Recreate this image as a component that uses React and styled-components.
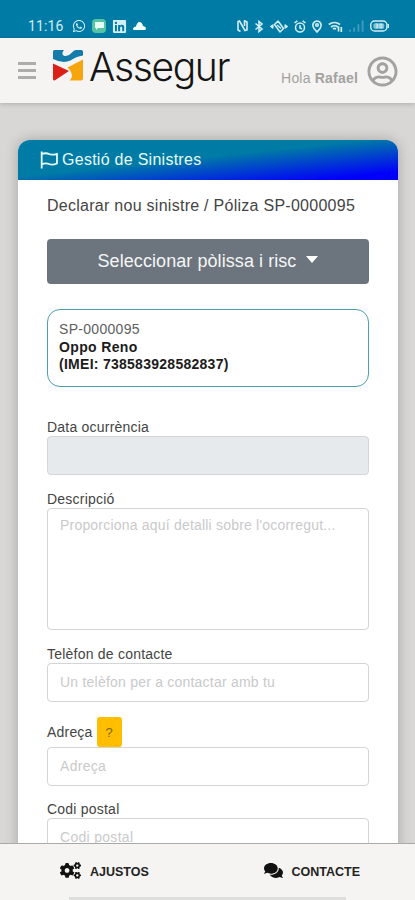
import React from 'react';
import styled, { createGlobalStyle, css } from 'styled-components';
import { FaWhatsapp, FaLinkedin, FaRegUserCircle, FaCogs, FaComments } from 'react-icons/fa';

const GlobalStyle = createGlobalStyle`
  * { box-sizing: border-box; }
  body { margin: 0; font-family: "Liberation Sans", Arial, sans-serif; color: #333; background: #d8d7d5; }
`;

const Screen = styled.div`
  display: flex;
  flex-direction: column;
  width: 415px;
  height: 900px;
  overflow: hidden;
  background: #d8d7d5;
`;

const StatusBar = styled.div`
  flex: none;
  height: 38px;
  padding: 14px 26px 0 28px;
  display: flex;
  justify-content: space-between;
  background: #007ba6;
  color: #d3eef4;
`;

const StatusGroup = styled.div`
  display: flex;
  align-items: center;
  height: 24px;
  gap: 6px;
  svg { display: block; flex: none; }
`;

const Clock = styled.span`
  width: 38px;
  font: 14px/24px Roboto, sans-serif;
  letter-spacing: 0.1px;
  white-space: nowrap;
`;

const ChatBadge = styled.span`
  display: flex;
  align-items: center;
  justify-content: center;
  width: 14px;
  height: 14px;
  border-radius: 4px;
  background: #55c4a4;
`;

const Header = styled.header`
  flex: none;
  position: relative;
  z-index: 1;
  display: flex;
  height: 65px;
  padding: 0 17px 0 18px;
  background: #f5f4f2;
  box-shadow: 0 1px 5px rgba(0, 0, 0, 0.2);
`;

const MenuButton = styled.button`
  width: 18px;
  height: 17px;
  margin-top: 24px;
  padding: 0;
  border: 0;
  background: none;
  display: flex;
  flex-direction: column;
  justify-content: space-between;
`;

const MenuLine = styled.span`
  height: 3px;
  background: #adacab;
`;

const Brand = styled.div`
  display: flex;
  margin-left: 17px;
  svg { margin-top: 12px; flex: none; }
`;

const BrandName = styled.span`
  margin: 4px 0 0 6px;
  font: 300 39px/50px Inter, sans-serif;
  letter-spacing: -1.35px;
  color: #151515;
`;

const Account = styled.div`
  display: flex;
  margin-left: auto;
  color: #a3a2a1;
  svg { margin-top: 18px; }
`;

const Greeting = styled.span`
  margin: 31px 9px 0 0;
  font-size: 14px;
  line-height: 18px;
  letter-spacing: 0.2px;
  white-space: nowrap;
`;

const Main = styled.main`
  flex: 1;
  min-height: 0;
  overflow: hidden;
  padding: 37px 17px 0 18px;
`;

const Card = styled.section`
  height: 900px;
  border-radius: 12px 12px 0 0;
  background: #fff;
  box-shadow: 0 0 13px rgba(0, 0, 0, 0.24);
`;

const CardHeader = styled.div`
  display: flex;
  align-items: center;
  height: 40px;
  padding-left: 22px;
  border-radius: 12px 12px 0 0;
  background: linear-gradient(to bottom right, #007ba5 0%, #007ba5 46%, #0000fa 90%);
  color: #e8fafa;
  font-size: 16px;
  svg { margin-right: 4px; }
`;

const CardBody = styled.div`
  padding: 0 29px;
  display: flex;
  flex-direction: column;
`;

const Text = styled.span`
  letter-spacing: ${(p) => p.$track || 0}px;
  white-space: nowrap;
`;

const Title = styled.h1`
  margin: 15px 0 0;
  height: 22px;
  font-size: 16px;
  font-weight: 400;
  line-height: 22px;
  color: #444;
`;

const SelectButton = styled.button`
  display: flex;
  align-items: center;
  justify-content: center;
  height: 45px;
  margin-top: 22px;
  padding: 0 0 1px;
  border: 0;
  border-radius: 4px;
  background: #6c757d;
  color: #f5f6f7;
  font: 18px "Liberation Sans", Arial, sans-serif;
`;

const Caret = styled.span`
  margin: -4px 0 0 10px;
  border: 6px solid transparent;
  border-top: 7px solid #fff;
  border-bottom: 0;
`;

const PolicyBox = styled.div`
  height: 78px;
  margin-top: 25px;
  padding: 11px 11px 0;
  border: 1px solid #4b9fb0;
  border-radius: 13px;
  font-size: 14px;
  line-height: 17.5px;
  color: #222;
`;

const PolicyLine = styled.div`
  font-weight: ${(p) => (p.$bold ? 700 : 400)};
  color: ${(p) => (p.$bold ? '#1c1c1c' : '#606060')};
`;

const Field = styled.div`
  display: flex;
  flex-direction: column;
  margin-top: ${(p) => p.$top}px;
`;

const Label = styled.label`
  display: flex;
  align-items: center;
  height: ${(p) => p.$height || 18}px;
  font-size: 14px;
  color: #444;
`;

const controlStyle = css`
  width: 100%;
  border: 1px solid #d4d5d6;
  border-radius: 4px;
  padding: 0 12px 2px;
  background: #fff;
  font: 14px "Liberation Sans", Arial, sans-serif;
  letter-spacing: ${(p) => p.$track || 0}px;
  &::placeholder { color: #c9cacb; opacity: 1; }
`;

const Input = styled.input`
  ${controlStyle}
  height: 39px;
  &:disabled { background: #e7eaed; }
`;

const TextArea = styled.textarea`
  ${controlStyle}
  display: block;
  height: 122px;
  padding-top: 8px;
  resize: none;
`;

const HelpButton = styled.button`
  width: 25px;
  height: 30px;
  margin-left: 4px;
  padding: 0;
  border: 0;
  border-radius: 3px;
  background: #ffbf00;
  color: #7d640e;
  font: 13px "Liberation Sans", Arial, sans-serif;
`;

const BottomBar = styled.nav`
  flex: none;
  position: relative;
  height: 57px;
  display: grid;
  grid-template-columns: 1fr 1fr;
  border-top: 1px solid #a9a9a8;
  background: #f5f4f2;
`;

const NavItem = styled.a`
  display: flex;
  align-items: center;
  height: 56px;
  padding-left: ${(p) => p.$left}px;
  color: #222;
  font-size: 12.5px;
  font-weight: 700;
  svg { margin: -3px 9px 0 0; color: #111; }
`;

const HomeHandle = styled.div`
  position: absolute;
  left: 69px;
  bottom: 0;
  width: 277px;
  height: 3px;
  background: #dededd;
`;

const LogoMark = () => (
  <svg width="30" height="31" viewBox="0 0 30 31">
    <path d="M0 1.500Q0 0 1.500 0H11Q8 3.500 10.500 5.500Q14.500 7.500 19 2.500Q20.500 0 23 0H28.500Q30 0 30 1.500V5.500Q23 6.500 17.500 10.500Q10 14 0 9Z" fill="#147caa" />
    <path d="M0 13.500L16 21L2 30.300Q0 31 0 29Z" fill="#dc2019" />
    <path d="M30 9.500V28.500Q30 30.500 28 30.500H16.500Q20 28 18.500 23Q17.500 20 14.500 17.500Z" fill="#f6a50c" />
  </svg>
);

const FlagIcon = () => (
  <svg width="18" height="18" viewBox="0 0 18 18" fill="none" stroke="currentColor" strokeWidth="1.8" strokeLinejoin="round">
    <path d="M1.700 0.500V17.500M1.700 3Q6 1.500 9 3T17 2.800V12.500Q12.500 14.500 9 13T1.700 13.500" />
  </svg>
);

const NfcIcon = () => (
  <svg width="11" height="12" viewBox="0 0 11 12" fill="none" stroke="currentColor" strokeWidth="1.6">
    <path d="M3.500 11.500L1 10V1.500L2.500 1L8 10.500L10 10V2L7.500 0.700V6" />
  </svg>
);

const BluetoothIcon = () => (
  <svg width="10" height="13" viewBox="0 0 10 13" fill="none" stroke="currentColor" strokeWidth="1.6">
    <path d="M1.500 3.500L8 9L5 11.500V1.500L8 4L1.500 9.500" />
  </svg>
);

const VibrateIcon = () => (
  <svg width="18" height="13" viewBox="0 0 18 13" fill="none" stroke="currentColor" strokeWidth="1.5" strokeLinejoin="round">
    <path d="M4.500 4.500L8 1L13.500 8.500L10 12Z" />
    <path d="M7 5L11 8.500M0.800 6.500L2.800 5V8ZM17.200 6.500L15.200 5V8Z" />
  </svg>
);

const AlarmIcon = () => (
  <svg width="12" height="13" viewBox="0 0 12 13" fill="none" stroke="currentColor" strokeWidth="1.5">
    <circle cx="6" cy="7.500" r="4.500" />
    <path d="M0.500 3L3.300 0.800M11.500 3L8.700 0.800M6 5V8L8 9" />
  </svg>
);

const PinIcon = () => (
  <svg width="10" height="13" viewBox="0 0 10 13" fill="none" stroke="currentColor" strokeWidth="1.600">
    <path d="M5 12L2 8.500Q-0.500 4.500 2.500 1.800Q5 0.200 7.500 1.800Q10.500 4.500 8 8.500Z" />
    <circle cx="5" cy="5" r="1.300" />
  </svg>
);

const WifiIcon = () => (
  <svg width="15" height="13" viewBox="0 0 15 13" fill="none" stroke="currentColor" strokeWidth="1.7">
    <path d="M0.800 4.500Q6.500 0.500 12 4.500M3 7Q6.500 4.500 10 7M5 9Q6.500 7.800 8 9M10.500 6.500V11.500M13.300 7V12" />
  </svg>
);

const SignalIcon = () => (
  <svg width="15" height="12" viewBox="0 0 16 12" fill="#3f9bbd">
    <path d="M0 10h2v2H0zM4.500 7.500h2V12h-2zM9 4h2v8H9zM13.500 0h2v12h-2z" />
  </svg>
);

const BatteryIcon = () => (
  <svg width="19" height="12" viewBox="0 0 20 12" fill="none" stroke="currentColor" strokeWidth="1.5">
    <rect x="0.800" y="0.800" width="17" height="10.400" rx="4" />
    <path d="M19.200 4V8" />
    <rect x="3.500" y="3" width="11.500" height="6" rx="2" fill="#7fc2d4" stroke="none" />
    <path d="M6 4h2v4H6M8 6H6.500M10.500 4h2v4h-2z" strokeWidth="1" />
  </svg>
);

export default function App() {
  return (
    <Screen>
      <GlobalStyle />
      <StatusBar>
        <StatusGroup>
          <Clock>11:16</Clock>
          <FaWhatsapp size={14} />
          <ChatBadge>
            <svg width="9" height="8" viewBox="0 0 9 8"><path d="M0 0H9V6H3L1 8V6H0Z" fill="#e5fff5" /></svg>
          </ChatBadge>
          <FaLinkedin size={15} />
          <svg width="13" height="8" viewBox="0 0 13 8"><path d="M1 8Q0 8 0 6.500Q1 4.500 3 4.500Q4 0 6.500 0Q9 0 10 4Q13 4.500 13 7L12 8Z" fill="#f2ffff" /></svg>
        </StatusGroup>
        <StatusGroup>
          <NfcIcon />
          <BluetoothIcon />
          <VibrateIcon />
          <AlarmIcon />
          <PinIcon />
          <WifiIcon />
          <SignalIcon />
          <BatteryIcon />
        </StatusGroup>
      </StatusBar>

      <Header>
        <MenuButton aria-label="Menú"><MenuLine /><MenuLine /><MenuLine /></MenuButton>
        <Brand>
          <LogoMark />
          <BrandName>Assegur</BrandName>
        </Brand>
        <Account>
          <Greeting>Hola <b>Rafael</b></Greeting>
          <FaRegUserCircle size={31} />
        </Account>
      </Header>

      <Main>
        <Card>
          <CardHeader>
            <FlagIcon />
            <Text $track={0.27}>Gestió de Sinistres</Text>
          </CardHeader>
          <CardBody>
            <Title><Text $track={0.27}>Declarar nou sinistre / Póliza SP-0000095</Text></Title>
            <SelectButton>
              <Text $track={0.07}>Seleccionar pòlissa i risc</Text>
              <Caret />
            </SelectButton>
            <PolicyBox>
              <PolicyLine><Text $track={0.3}>SP-0000095</Text></PolicyLine>
              <PolicyLine $bold><Text $track={0.35}>Oppo Reno</Text></PolicyLine>
              <PolicyLine $bold><Text $track={0.27}>(IMEI: 738583928582837)</Text></PolicyLine>
            </PolicyBox>
            <Field $top={31}>
              <Label><Text $track={0.22}>Data ocurrència</Text></Label>
              <Input disabled />
            </Field>
            <Field $top={15}>
              <Label><Text $track={0.22}>Descripció</Text></Label>
              <TextArea $track={0.2} placeholder="Proporciona aquí detalli sobre l'ocorregut..." />
            </Field>
            <Field $top={15}>
              <Label><Text $track={0.22}>Telèfon de contacte</Text></Label>
              <Input $track={0.22} placeholder="Un telèfon per a contactar amb tu" />
            </Field>
            <Field $top={15}>
              <Label $height={30}><Text $track={0.2}>Adreça</Text><HelpButton>?</HelpButton></Label>
              <Input $track={0.3} placeholder="Adreça" />
            </Field>
            <Field $top={14}>
              <Label><Text $track={0.22}>Codi postal</Text></Label>
              <Input $track={0.3} placeholder="Codi postal" />
            </Field>
          </CardBody>
        </Card>
      </Main>

      <BottomBar>
        <NavItem $left={60}><FaCogs size={21} /><Text>AJUSTOS</Text></NavItem>
        <NavItem $left={56}><FaComments size={19} /><Text>CONTACTE</Text></NavItem>
        <HomeHandle />
      </BottomBar>
    </Screen>
  );
}
